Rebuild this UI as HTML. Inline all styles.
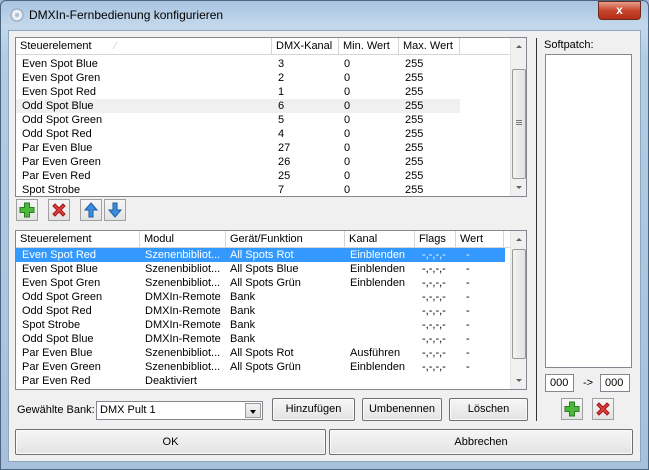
<!DOCTYPE html>
<html><head><meta charset="utf-8"><style>
*{box-sizing:border-box;margin:0;padding:0}
body{width:649px;height:470px;overflow:hidden;background:#9fbad6;font-family:"Liberation Sans",sans-serif;font-size:11px;color:#000;position:relative}
.a{position:absolute}
.frame{left:0;top:0;width:649px;height:470px;background:linear-gradient(180deg,#a9c4e0 0,#c3d8ec 25px,#b3cbe3 60px,#a8c0da 100%);border:1px solid #4b6580;border-radius:6px 6px 0 0}
.client{left:8px;top:30px;width:633px;height:432px;background:#f0f0f0;border:1px solid #8fa6bf}
.box{background:#fff;border:1px solid #828790}
.hdr{background:#fff;border-bottom:1px solid #d5d5d5;height:17px}
.hc{position:absolute;top:0;height:17px;line-height:16px;padding-left:4px;border-right:1px solid #d5d5d5;white-space:nowrap;overflow:hidden}
.row{position:absolute;height:14px;line-height:14px;white-space:nowrap}
.row span{position:absolute;top:0}
.sb{background:#f0f0f0;border-left:1px solid #e6e6e6}
.thumb{position:absolute;left:1px;width:14px;background:linear-gradient(90deg,#f3f3f3,#e2e2e2);border:1px solid #9a9a9a;border-radius:2px}
.btn{position:absolute;background:linear-gradient(#f6f6f6,#e3e3e3);border:1px solid #707070;border-radius:2px;text-align:center;line-height:21px;box-shadow:inset 0 0 0 1px #fbfbfb}
.ib{position:absolute;width:22px;height:22px;background:linear-gradient(#f6f6f6,#e3e3e3);border:1px solid #a0a0a0}
.tri{position:absolute;width:0;height:0;border-left:3px solid transparent;border-right:3px solid transparent}
</style></head><body>
<div class="a frame"></div>
<svg class="a" style="left:10px;top:8px" width="14" height="14"><circle cx="7" cy="7" r="6" fill="#e8eef5" stroke="#8a9bb0"/><circle cx="7" cy="7" r="2" fill="#b0c0d2"/></svg>
<div class="a" style="left:29px;top:8px;font-size:12px;color:#000">DMXIn-Fernbedienung konfigurieren</div>
<div class="a" style="left:598px;top:1px;width:43px;height:19px;background:linear-gradient(#e8a08c,#c7442b 50%,#b52f17);border:1px solid #6b2a1e;border-radius:0 0 4px 4px;color:#fff;text-align:center;font-weight:bold;font-size:12px;line-height:17px">x</div>
<div class="a client"></div>

<!-- top list -->
<div class="a box" style="left:15px;top:37px;width:512px;height:160px"></div>
<div class="a hdr" style="left:16px;top:38px;width:494px">
<div class="hc" style="left:0;width:256px">Steuerelement <span style="color:#c8d0da;margin-left:20px">⁄</span></div>
<div class="hc" style="left:256px;width:67px">DMX-Kanal</div>
<div class="hc" style="left:323px;width:60px">Min. Wert</div>
<div class="hc" style="left:383px;width:61px">Max. Wert</div>
</div>
<div class="a" style="left:16px;top:99px;width:444px;height:14px;background:#f0f0f0"></div>
<div class="a" style="left:16px;top:57px;width:494px">
<div class="row" style="top:0"><span style="left:6px">Even Spot Blue</span><span style="left:262px">3</span><span style="left:328px">0</span><span style="left:389px">255</span></div>
<div class="row" style="top:14px"><span style="left:6px">Even Spot Gren</span><span style="left:262px">2</span><span style="left:328px">0</span><span style="left:389px">255</span></div>
<div class="row" style="top:28px"><span style="left:6px">Even Spot Red</span><span style="left:262px">1</span><span style="left:328px">0</span><span style="left:389px">255</span></div>
<div class="row" style="top:42px"><span style="left:6px">Odd Spot Blue</span><span style="left:262px">6</span><span style="left:328px">0</span><span style="left:389px">255</span></div>
<div class="row" style="top:56px"><span style="left:6px">Odd Spot Green</span><span style="left:262px">5</span><span style="left:328px">0</span><span style="left:389px">255</span></div>
<div class="row" style="top:70px"><span style="left:6px">Odd Spot Red</span><span style="left:262px">4</span><span style="left:328px">0</span><span style="left:389px">255</span></div>
<div class="row" style="top:84px"><span style="left:6px">Par Even Blue</span><span style="left:262px">27</span><span style="left:328px">0</span><span style="left:389px">255</span></div>
<div class="row" style="top:98px"><span style="left:6px">Par Even Green</span><span style="left:262px">26</span><span style="left:328px">0</span><span style="left:389px">255</span></div>
<div class="row" style="top:112px"><span style="left:6px">Par Even Red</span><span style="left:262px">25</span><span style="left:328px">0</span><span style="left:389px">255</span></div>
<div class="row" style="top:126px"><span style="left:6px">Spot Strobe</span><span style="left:262px">7</span><span style="left:328px">0</span><span style="left:389px">255</span></div>
</div>
<div class="a sb" style="left:510px;top:38px;width:16px;height:158px">
<div class="tri" style="left:5px;top:7px;border-bottom:3px solid #606060"></div>
<div class="thumb" style="top:31px;height:110px"><div style="position:absolute;left:3px;top:50px;width:6px;height:5px;border-top:1px solid #777;border-bottom:1px solid #777"></div><div style="position:absolute;left:3px;top:52px;width:6px;border-top:1px solid #777"></div></div>
<div class="tri" style="left:5px;top:148px;border-top:3px solid #606060"></div>
</div>

<!-- icon buttons -->
<div class="ib" style="left:16px;top:199px"><svg width="20" height="20"><path d="M7.5 3h5v4.5h4.5v5h-4.5v4.5h-5v-4.5h-4.5v-5h4.5z" fill="#4cb83c" stroke="#2d7a22"/></svg></div>
<div class="ib" style="left:48px;top:199px"><svg width="20" height="20"><path d="M4 6l2-2 4 4 4-4 2 2-4 4 4 4-2 2-4-4-4 4-2-2 4-4z" fill="#e23c3c" stroke="#a01818"/></svg></div>
<div class="ib" style="left:80px;top:199px"><svg width="20" height="20"><path d="M10 3l6 7h-4v7h-4v-7h-4z" fill="#3a8ee0" stroke="#1c5aa0"/></svg></div>
<div class="ib" style="left:104px;top:199px"><svg width="20" height="20"><path d="M10 17l6-7h-4v-7h-4v7h-4z" fill="#3a8ee0" stroke="#1c5aa0"/></svg></div>

<!-- bottom list -->
<div class="a box" style="left:15px;top:230px;width:512px;height:160px"></div>
<div class="a hdr" style="left:16px;top:231px;width:494px">
<div class="hc" style="left:0;width:124px">Steuerelement</div>
<div class="hc" style="left:124px;width:86px">Modul</div>
<div class="hc" style="left:210px;width:119px">Gerät/Funktion</div>
<div class="hc" style="left:329px;width:70px">Kanal</div>
<div class="hc" style="left:399px;width:41px">Flags</div>
<div class="hc" style="left:440px;width:48px">Wert</div>
</div>
<div class="a" style="left:16px;top:248px;width:489px;height:14px;background:#3399ff"></div>
<div class="a" style="left:16px;top:248px;width:494px">
<div class="row" style="top:0;color:#fff"><span style="left:6px">Even Spot Red</span><span style="left:129px">Szenenbibliot...</span><span style="left:214px">All Spots Rot</span><span style="left:334px">Einblenden</span><span style="left:406px">-,-,-,-</span><span style="left:450px">-</span></div>
<div class="row" style="top:14px"><span style="left:6px">Even Spot Blue</span><span style="left:129px">Szenenbibliot...</span><span style="left:214px">All Spots Blue</span><span style="left:334px">Einblenden</span><span style="left:406px">-,-,-,-</span><span style="left:450px">-</span></div>
<div class="row" style="top:28px"><span style="left:6px">Even Spot Gren</span><span style="left:129px">Szenenbibliot...</span><span style="left:214px">All Spots Grün</span><span style="left:334px">Einblenden</span><span style="left:406px">-,-,-,-</span><span style="left:450px">-</span></div>
<div class="row" style="top:42px"><span style="left:6px">Odd Spot Green</span><span style="left:129px">DMXIn-Remote</span><span style="left:214px">Bank</span><span style="left:406px">-,-,-,-</span><span style="left:450px">-</span></div>
<div class="row" style="top:56px"><span style="left:6px">Odd Spot Red</span><span style="left:129px">DMXIn-Remote</span><span style="left:214px">Bank</span><span style="left:406px">-,-,-,-</span><span style="left:450px">-</span></div>
<div class="row" style="top:70px"><span style="left:6px">Spot Strobe</span><span style="left:129px">DMXIn-Remote</span><span style="left:214px">Bank</span><span style="left:406px">-,-,-,-</span><span style="left:450px">-</span></div>
<div class="row" style="top:84px"><span style="left:6px">Odd Spot Blue</span><span style="left:129px">DMXIn-Remote</span><span style="left:214px">Bank</span><span style="left:406px">-,-,-,-</span><span style="left:450px">-</span></div>
<div class="row" style="top:98px"><span style="left:6px">Par Even Blue</span><span style="left:129px">Szenenbibliot...</span><span style="left:214px">All Spots Rot</span><span style="left:334px">Ausführen</span><span style="left:406px">-,-,-,-</span><span style="left:450px">-</span></div>
<div class="row" style="top:112px"><span style="left:6px">Par Even Green</span><span style="left:129px">Szenenbibliot...</span><span style="left:214px">All Spots Grün</span><span style="left:334px">Einblenden</span><span style="left:406px">-,-,-,-</span><span style="left:450px">-</span></div>
<div class="row" style="top:126px"><span style="left:6px">Par Even Red</span><span style="left:129px">Deaktiviert</span></div>
</div>
<div class="a sb" style="left:510px;top:231px;width:16px;height:158px">
<div class="tri" style="left:5px;top:7px;border-bottom:3px solid #606060"></div>
<div class="thumb" style="top:18px;height:110px"></div>
<div class="tri" style="left:5px;top:148px;border-top:3px solid #606060"></div>
</div>

<!-- bank row -->
<div class="a" style="left:17px;top:404px">Gewählte Bank:</div>
<div class="a" style="left:96px;top:401px;width:167px;height:19px;background:#fff;border:1px solid #828790;line-height:17px;padding-left:3px">DMX Pult 1
<div style="position:absolute;right:1px;top:1px;width:16px;height:15px;background:linear-gradient(#f4f4f4,#dedede);border:1px solid #9a9a9a"><div class="tri" style="left:4px;top:6px;border-left-width:3.5px;border-right-width:3.5px;border-top:4px solid #000"></div></div></div>
<div class="btn" style="left:272px;top:398px;width:83px;height:23px">Hinzufügen</div>
<div class="btn" style="left:362px;top:398px;width:80px;height:23px">Umbenennen</div>
<div class="btn" style="left:449px;top:398px;width:79px;height:23px">Löschen</div>

<!-- separator -->
<div class="a" style="left:536px;top:38px;width:1px;height:383px;background:#333"></div>

<!-- softpatch -->
<div class="a" style="left:544px;top:39px">Softpatch:</div>
<div class="a box" style="left:545px;top:54px;width:87px;height:314px"></div>
<div class="a box" style="left:545px;top:374px;width:29px;height:18px;line-height:16px;padding-left:4px">000</div>
<div class="a" style="left:583px;top:377px">-&gt;</div>
<div class="a box" style="left:600px;top:374px;width:30px;height:18px;line-height:16px;padding-left:4px">000</div>
<div class="ib" style="left:561px;top:398px"><svg width="20" height="20"><path d="M7.5 3h5v4.5h4.5v5h-4.5v4.5h-5v-4.5h-4.5v-5h4.5z" fill="#4cb83c" stroke="#2d7a22"/></svg></div>
<div class="ib" style="left:592px;top:398px"><svg width="20" height="20"><path d="M4 6l2-2 4 4 4-4 2 2-4 4 4 4-2 2-4-4-4 4-2-2 4-4z" fill="#e23c3c" stroke="#a01818"/></svg></div>

<!-- ok/cancel -->
<div class="btn" style="left:15px;top:429px;width:311px;height:26px;line-height:24px">OK</div>
<div class="btn" style="left:329px;top:429px;width:304px;height:26px;line-height:24px">Abbrechen</div>
</body></html>
